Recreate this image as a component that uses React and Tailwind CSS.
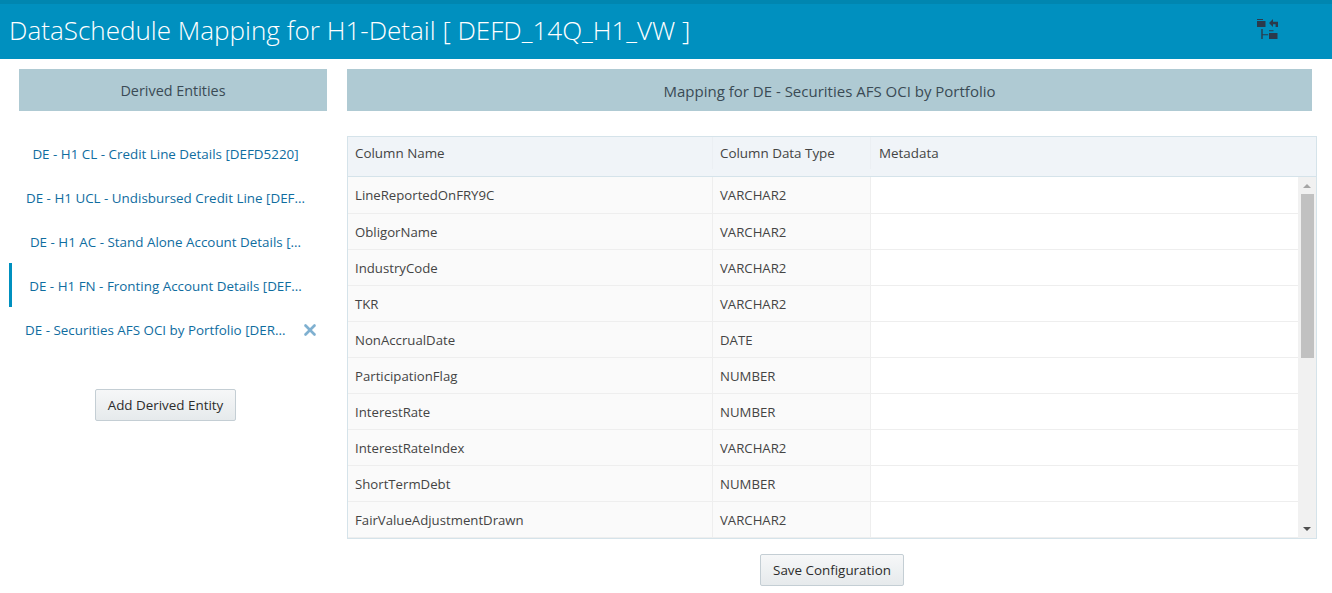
import React from 'react';
import { X } from 'lucide-react';

const entities = [
    { label: 'DE - H1 CL - Credit Line Details [DEFD5220]' },
    { label: 'DE - H1 UCL - Undisbursed Credit Line [DEF...' },
    { label: 'DE - H1 AC - Stand Alone Account Details [...' },
    { label: 'DE - H1 FN - Fronting Account Details [DEF...', active: true },
    { label: 'DE - Securities AFS OCI by Portfolio [DER...', removable: true }
];

const rows = [
    ['LineReportedOnFRY9C', 'VARCHAR2'],
    ['ObligorName', 'VARCHAR2'],
    ['IndustryCode', 'VARCHAR2'],
    ['TKR', 'VARCHAR2'],
    ['NonAccrualDate', 'DATE'],
    ['ParticipationFlag', 'NUMBER'],
    ['InterestRate', 'NUMBER'],
    ['InterestRateIndex', 'VARCHAR2'],
    ['ShortTermDebt', 'NUMBER'],
    ['FairValueAdjustmentDrawn', 'VARCHAR2']
];

function HierarchyIcon() {
    return (
        <svg width="21" height="21" viewBox="0 0 21 21" className="mb-[4px] text-[#2b3a4c]">
            <path fill="currentColor" d="M0 0h6v1H0zM0 2h8.500v6H0z" />
            <path fill="currentColor" d="M12 4l4-4v2.700h5V8h-2.400V5.200H16V8z" />
            <path fill="currentColor" d="M4.300 10h1.400v10H4.300zM5.700 15.200h5.500v1H5.700z" />
            <path fill="currentColor" d="M12 11.300h4.500v1H12zM12 14h8.500v6H12z" />
        </svg>
    );
}

export default function App() {
    return (
        <div className="h-[593px] w-[1332px] overflow-hidden bg-white font-['Open_Sans',sans-serif] text-[13.4px] text-[#333]">
            {/* Header */}
            <div className="flex h-[59px] items-center justify-between border-t-4 border-[#0086b0] bg-[#0090bf] pl-[9px] pr-[54px]">
                <h1 className="mb-[4px] text-[26.05px] font-light leading-[46px] text-white">DataSchedule Mapping for H1-Detail [ DEFD_14Q_H1_VW ]</h1>
                <HierarchyIcon />
            </div>

            <div className="flex pt-[10px]">
                {/* Derived entities */}
                <div className="ml-[9px] w-[318px]">
                    <div className="ml-[10px] flex h-[42px] items-center justify-center bg-[#afcad3] pt-[2px] text-[14.4px] text-[#3a4a55]">
                        Derived Entities
                    </div>
                    <ul className="mt-[20px]">
                        {entities.map((item) => (
                            <li
                                key={item.label}
                                className={`flex h-[44px] items-center border-l-[3px] pt-[2px] text-[#0f6d9f] ${item.active ? 'border-[#0090bf]' : 'border-transparent'}`}
                            >
                                {item.removable ? (
                                    <>
                                        <span className="ml-[13px] w-[266px] whitespace-nowrap">{item.label}</span>
                                        <X size={18} strokeWidth={3.5} className="ml-[10px] text-[#7fb0d0]" />
                                    </>
                                ) : (
                                    <span className="ml-[-4px] w-full whitespace-nowrap text-center">{item.label}</span>
                                )}
                            </li>
                        ))}
                    </ul>
                    <div className="mt-[38px] flex justify-center pr-[5px]">
                        <button className="h-[32px] w-[141px] rounded-[2px] border border-[#c4ced4] bg-gradient-to-b from-[#f6f7f8] to-[#e6eaec] pt-[1px] text-[13.4px] text-[#2c2c2c]">
                            Add Derived Entity
                        </button>
                    </div>
                </div>

                {/* Mapping */}
                <div className="ml-[20px] w-[970px]">
                    <div className="flex h-[42px] w-[965px] items-center justify-center bg-[#afcad3] pt-[2px] text-[15px] text-[#3a4a55]">
                        Mapping for DE - Securities AFS OCI by Portfolio
                    </div>
                    <div className="mt-[25px] h-[403px] border border-[#d5e3ea] bg-white">
                        <div className="flex h-[40px] items-start border-b border-[#d5e3ea] bg-[#f0f4f8] leading-[20px] text-[#444]">
                            <div className="h-[32px] w-[365px] border-r border-[#ebeff3] pl-[7px] pt-[6px]">Column Name</div>
                            <div className="h-[32px] w-[158px] border-r border-[#ebeff3] pl-[7px] pt-[6px]">Column Data Type</div>
                            <div className="pl-[8px] pt-[6px]">Metadata</div>
                        </div>
                        <div className="flex h-[361px]">
                            <div className="flex-1 overflow-hidden">
                                {rows.map(([name, type], i) => (
                                    <div key={name} className={`flex border-b border-[#eeeeee] text-[13.2px] text-[#444] ${i === 0 ? 'h-[37px] leading-[36px]' : 'h-[36px] leading-[36px]'}`}>
                                        <div className="w-[365px] border-r border-[#eeeeee] bg-[#fafafa] pl-[7px]">{name}</div>
                                        <div className="w-[158px] border-r border-[#eeeeee] bg-[#fafafa] pl-[7px]">{type}</div>
                                        <div className="flex-1 bg-white"></div>
                                    </div>
                                ))}
                            </div>
                            {/* Scrollbar */}
                            <div className="relative w-[18px] bg-[#f1f1f1]">
                                <div className="absolute left-[5px] top-[7px] h-0 w-0 border-x-[4px] border-b-[4px] border-x-transparent border-b-[#a5a5a5]"></div>
                                <div className="absolute left-[3px] top-[17px] h-[164px] w-[13px] bg-[#c1c1c1]"></div>
                                <div className="absolute bottom-[7px] left-[5px] h-0 w-0 border-x-[4px] border-t-[4px] border-x-transparent border-t-[#505050]"></div>
                            </div>
                        </div>
                    </div>
                    <div className="mt-[15px] flex justify-center">
                        <button className="h-[32px] w-[144px] rounded-[2px] border border-[#c4ced4] bg-gradient-to-b from-[#f6f7f8] to-[#e6eaec] pt-[1px] text-[13.4px] text-[#2c2c2c]">
                            Save Configuration
                        </button>
                    </div>
                </div>
            </div>
        </div>
    );
}
